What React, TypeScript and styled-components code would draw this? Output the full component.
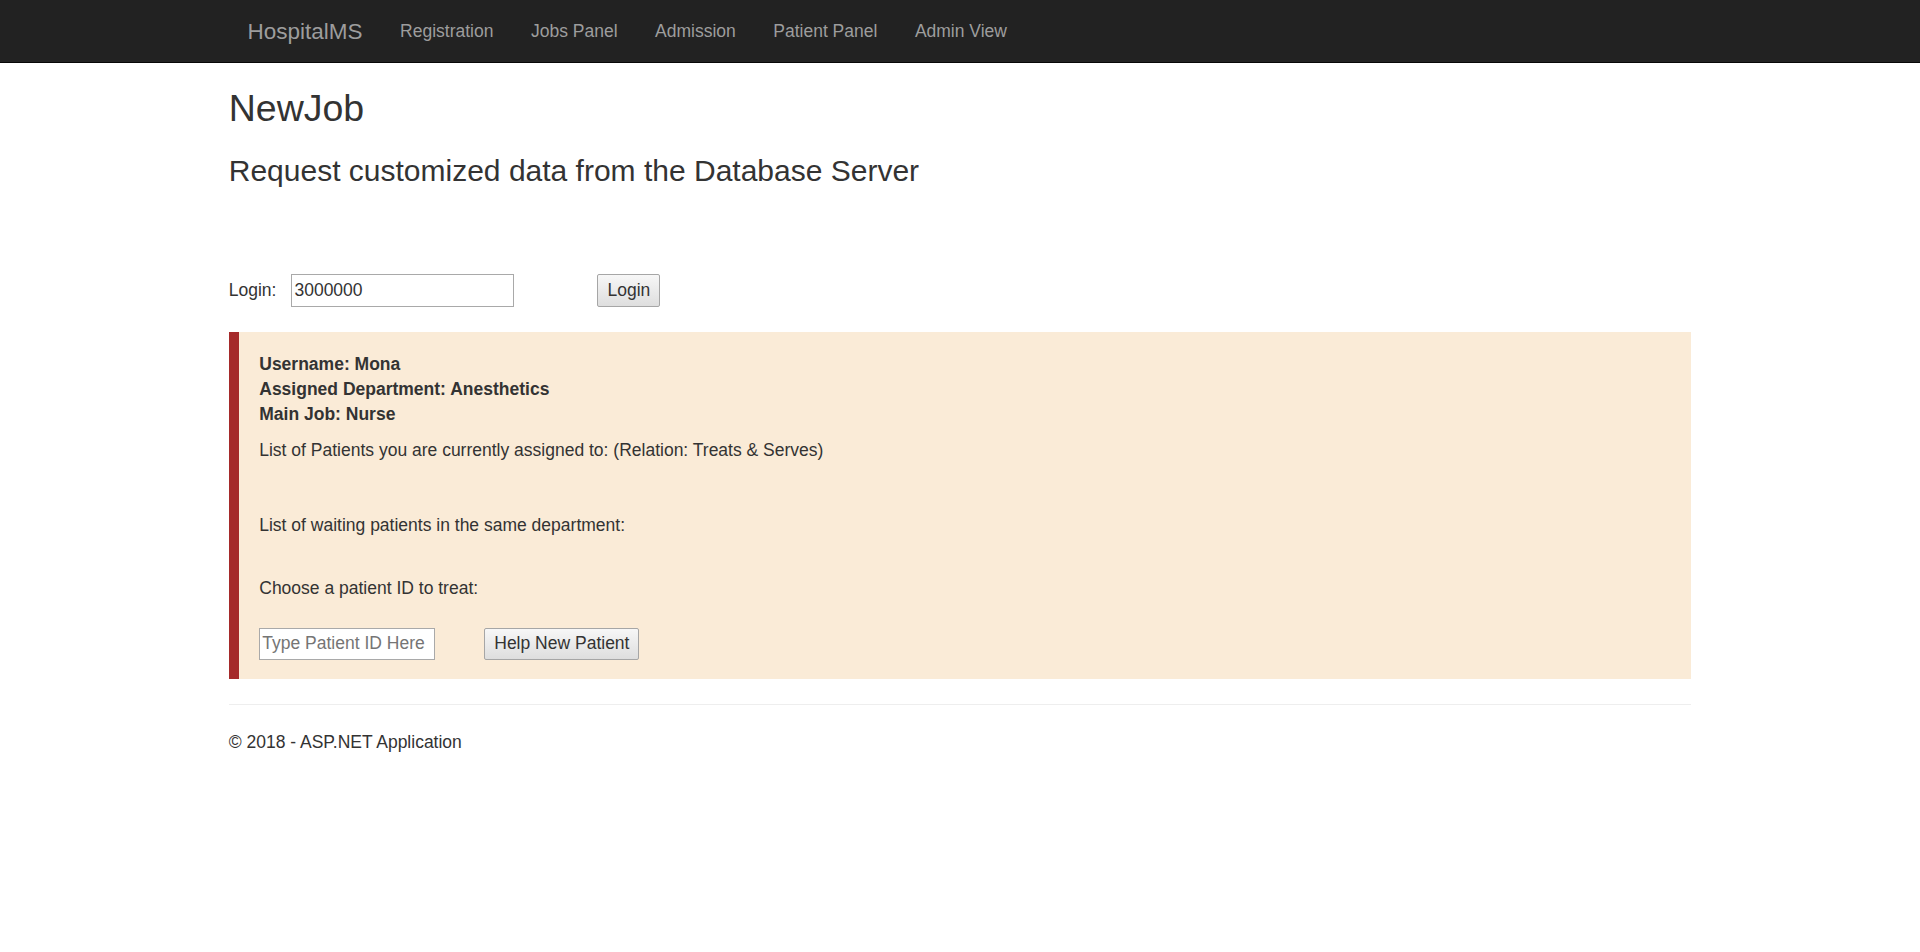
import styled, { createGlobalStyle } from "styled-components";

const GlobalStyle = createGlobalStyle`
  html, body {
    margin: 0;
    padding: 0;
    background: #fff;
  }

  body {
    font-family: "Liberation Sans", Arial, Helvetica, sans-serif;
    font-size: 17.5px;
    line-height: 25px;
    color: #333;
  }

  * {
    box-sizing: border-box;
  }
`;

const navLinks = [
  "Registration",
  "Jobs Panel",
  "Admission",
  "Patient Panel",
  "Admin View",
];

function App() {
  return (
    <>
      <GlobalStyle />
      <S_Navbar>
        <div className="inner">
          <a className="brand">HospitalMS</a>
          <ul>
            {navLinks.map((link) => (
              <li key={link}>
                <a>{link}</a>
              </li>
            ))}
          </ul>
        </div>
      </S_Navbar>

      <S_Main>
        <Title>NewJob</Title>
        <Subtitle>Request customized data from the Database Server</Subtitle>

        <LoginRow>
          <label htmlFor="login">Login:</label>
          <TextInput id="login" $width={223} $height={33} defaultValue="3000000" />
          <Button $gap={83} $height={33}>
            Login
          </Button>
        </LoginRow>

        <Alert>
          <InfoBlock>
            <div>Username: Mona</div>
            <div>Assigned Department: Anesthetics</div>
            <div>Main Job: Nurse</div>
          </InfoBlock>
          <Line $gap={11.75}>
            List of Patients you are currently assigned to: (Relation: Treats
            &amp; Serves)
          </Line>
          <Line $gap={50}>List of waiting patients in the same department:</Line>
          <Line $gap={38}>Choose a patient ID to treat:</Line>
          <PatientRow>
            <TextInput $width={176} $height={32} placeholder="Type Patient ID Here" />
            <Button $gap={49} $height={32}>
              Help New Patient
            </Button>
          </PatientRow>
        </Alert>

        <S_Footer>
          <p>© 2018 - ASP.NET Application</p>
        </S_Footer>
      </S_Main>
    </>
  );
}

export default App;

const S_Navbar = styled.nav`
  height: 63px;
  background: #222;
  border-bottom: 1px solid #080808;

  .inner {
    width: 1462.5px;
    margin: 0 auto;
    display: flex;
    align-items: stretch;
    height: 62px;
  }

  .brand {
    display: block;
    padding: 18.75px;
    font-size: 22.5px;
    line-height: 25px;
    color: #9d9d9d;
  }

  ul {
    display: flex;
    list-style: none;
    margin: 0;
    padding: 0;

    a {
      display: block;
      padding: 18.75px;
      line-height: 25px;
      color: #9d9d9d;
    }
  }
`;

const S_Main = styled.main`
  width: 1462.5px;
  margin: 0 auto;
`;

const Title = styled.h2`
  margin: 24.5px 0 0;
  font-size: 37.5px;
  line-height: 1.1;
  font-weight: 500;
`;

const Subtitle = styled.h3`
  margin: 25px 0 0;
  font-size: 30px;
  line-height: 1.1;
  font-weight: 500;
`;

const LoginRow = styled.div`
  margin-top: 87.25px;
  display: flex;
  align-items: center;
  height: 33px;

  label {
    margin-right: 15px;
  }
`;

const TextInput = styled.input<{ $width: number; $height: number }>`
  width: ${(p) => p.$width}px;
  height: ${(p) => p.$height}px;
  padding: 1px 2px;
  border: 1px solid #a9a9a9;
  border-radius: 0;
  background: #fff;
  font-family: inherit;
  font-size: 17.5px;
  color: #333;
  outline: none;

  &::placeholder {
    color: #757575;
  }
`;

const Button = styled.button<{ $gap: number; $height: number }>`
  margin-left: ${(p) => p.$gap}px;
  height: ${(p) => p.$height}px;
  padding: 0 9px;
  border: 1px solid #a6a6a6;
  border-radius: 2px;
  background: linear-gradient(#f7f7f7, #dedede);
  font-family: inherit;
  font-size: 17.5px;
  color: #333;
`;

const Alert = styled.div`
  margin-top: 25px;
  padding: 19.5px 18.75px 19.5px 20.5px;
  background: #faebd7;
  border-left: 10px solid #a52a2a;
`;

const InfoBlock = styled.div`
  font-weight: bold;
`;

const Line = styled.p<{ $gap: number }>`
  margin: ${(p) => p.$gap}px 0 0;
`;

const PatientRow = styled.div`
  margin-top: 26.5px;
  display: flex;
  align-items: center;
`;

const S_Footer = styled.footer`
  margin-top: 25px;
  border-top: 1px solid #eee;
  padding-top: 25px;

  p {
    margin: 0 0 12.5px;
  }
`;
